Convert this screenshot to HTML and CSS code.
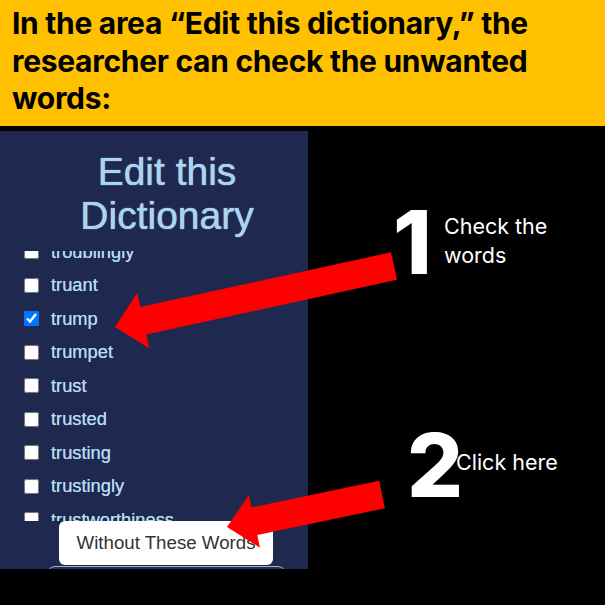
FILE: index.html
```html
<!DOCTYPE html>
<html lang="en">
<head>
<meta charset="utf-8">
<title>Edit this Dictionary</title>
<link rel="stylesheet" href="styles.css">
</head>
<body>
<div class="slide">
  <header class="banner">
    <p class="banner-text">In the area “Edit this dictionary,” the<br>researcher can check the unwanted<br>words:</p>
  </header>
  <main class="main">
    <section class="panel">
      <h1 class="panel-title">Edit this<br>Dictionary</h1>
      <div class="word-scroll">
        <ul class="word-list">
          <li class="word-row"><input type="checkbox" class="word-check"><span class="word">troublingly</span></li>
          <li class="word-row"><input type="checkbox" class="word-check"><span class="word">truant</span></li>
          <li class="word-row"><input type="checkbox" class="word-check" checked><span class="word">trump</span></li>
          <li class="word-row"><input type="checkbox" class="word-check"><span class="word">trumpet</span></li>
          <li class="word-row"><input type="checkbox" class="word-check"><span class="word">trust</span></li>
          <li class="word-row"><input type="checkbox" class="word-check"><span class="word">trusted</span></li>
          <li class="word-row"><input type="checkbox" class="word-check"><span class="word">trusting</span></li>
          <li class="word-row"><input type="checkbox" class="word-check"><span class="word">trustingly</span></li>
          <li class="word-row"><input type="checkbox" class="word-check"><span class="word">trustworthiness</span></li>
        </ul>
      </div>
      <button class="btn-primary" type="button">Without These Words</button>
      <div class="btn-secondary"></div>
    </section>
    <aside class="notes">
      <div class="step step-1">
        <span class="step-num">1</span>
        <span class="step-label">Check the<br>words</span>
      </div>
      <div class="step step-2">
        <span class="step-num">2</span>
        <span class="step-label">Click here</span>
      </div>
    </aside>
  </main>
  <svg class="arrows" width="605" height="605" viewBox="0 0 605 605" aria-hidden="true">
    <polygon fill="#ff0000" points="115,327 137.2,293 140.3,307.1 391,252.3 397,279.7 146.3,334.5 149.4,348.6"/>
    <polygon fill="#ff0000" points="227,527 248.9,494.9 251.5,507.5 379.1,480.8 384.9,508.2 257.3,535 259.9,547.7"/>
  </svg>
</div>
</body>
</html>
```

FILE: styles.css
```css
* { box-sizing: border-box; }

html, body {
  margin: 0;
  padding: 0;
  background: #000;
}

.slide {
  position: relative;
  width: 605px;
  height: 605px;
  overflow: hidden;
  background: #000;
}

.banner {
  height: 126px;
  background: #ffc000;
  padding: 5px 12px 0;
}

.banner-text {
  margin: 0;
  font-family: "Inter", "Liberation Sans", sans-serif;
  font-weight: 700;
  font-size: 30px;
  line-height: 37.5px;
  color: #000;
  letter-spacing: -0.3px;
}

.main {
  display: flex;
  margin-top: 5px;
  height: 438px;
}

.panel {
  width: 308px;
  flex: none;
  height: 438px;
  overflow: hidden;
  background: #1f2950;
  padding-top: 19px;
  font-family: "Liberation Sans", Arial, sans-serif;
}

.panel-title {
  margin: 0;
  padding-left: 26px;
  text-align: center;
  font-weight: 400;
  font-size: 39px;
  line-height: 44px;
  color: #a8d5f0;
  text-shadow: 0 0 1px #d8eefa;
}

.word-scroll {
  margin-top: 13px;
  height: 270px;
  overflow: hidden;
}

.word-list {
  list-style: none;
  margin: -16px 0 0;
  padding: 0 0 0 24px;
}

.word-row {
  display: flex;
  align-items: center;
  height: 33.5px;
}

.word-check {
  width: 15px;
  height: 15px;
  margin: 0 12px 0 0;
  flex: none;
}

.word {
  font-size: 18.3px;
  line-height: 20px;
  color: #b4daf3;
  text-shadow: 0 0 0.5px #b4daf3;
}

.btn-primary {
  display: block;
  width: 214px;
  height: 44px;
  margin: 0 0 0 59px;
  padding: 0;
  border: none;
  border-radius: 6px;
  background: #fff;
  color: #333;
  font-family: "Liberation Sans", Arial, sans-serif;
  font-size: 18.7px;
  text-align: center;
}

.btn-secondary {
  width: 239px;
  height: 40px;
  margin: 1px 0 0 47px;
  border: 1.5px solid #9fb0c8;
  border-radius: 8px;
  background: #26315a;
}

.notes {
  flex: 1;
  display: flex;
  flex-direction: column;
  padding-top: 67px;
  color: #fff;
  font-family: "Inter", "Liberation Sans", sans-serif;
}

.step {
  display: flex;
  align-items: flex-start;
}

.step-num {
  font-weight: 800;
  font-size: 88px;
  line-height: 88px;
  flex: none;
}

.step-label {
  font-size: 21.5px;
  line-height: 29px;
  font-weight: 400;
}

.step-1 { padding-left: 85px; }
.step-1 .step-num { width: 51px; }
.step-1 .step-label { margin-top: 14px; }

.step-2 { padding-left: 99px; margin-top: 135px; }
.step-2 .step-num { width: 49px; }
.step-2 .step-label { margin-top: 27px; }

.arrows {
  position: absolute;
  left: 0;
  top: 0;
  pointer-events: none;
}
```
